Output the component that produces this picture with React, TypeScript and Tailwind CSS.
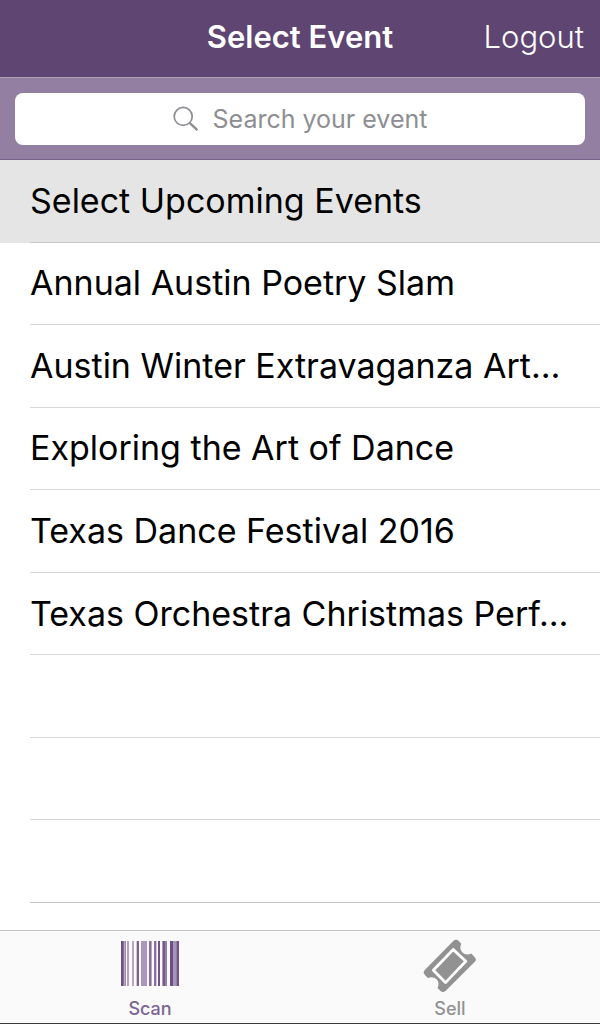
import { useState } from "react";

const events = [
  "Annual Austin Poetry Slam",
  "Austin Winter Extravaganza Art…",
  "Exploring the Art of Dance",
  "Texas Dance Festival 2016",
  "Texas Orchestra Christmas Perf…",
];

const emptyRows = [0, 1, 2];

// [x, width, color]
const bars: [number, number, string][] = [
  [0, 2, "#6c4f86"],
  [2, 1, "#8b72a0"],
  [3, 1, "#b3aab8"],
  [4, 1, "#a08cb2"],
  [6, 2, "#b3a0c2"],
  [11, 2, "#b7abc0"],
  [15, 1, "#cfc6d6"],
  [16, 2, "#7d648f"],
  [20, 6, "#ab97bd"],
  [28, 2, "#86709a"],
  [30, 1, "#b7a8c4"],
  [33, 2, "#8a70a1"],
  [35, 1, "#cfc6d6"],
  [37, 2, "#6f5389"],
  [41, 1, "#ab97bd"],
  [42, 2, "#745a8b"],
  [44, 2, "#957fa8"],
  [49, 3, "#6c4f86"],
  [52, 3, "#a893ba"],
  [55, 1, "#947da9"],
  [56, 2, "#6f5389"],
];

function BarcodeIcon() {
  return (
    <svg width="58" height="54" viewBox="0 0 58 54" aria-hidden="true">
      {bars.map(([x, width, color]) => (
        <rect key={x} x={x} y="2" width={width} height="45" fill={color} />
      ))}
    </svg>
  );
}

function TicketIcon() {
  return (
    <svg width="54" height="54" viewBox="0 0 54 54" aria-hidden="true">
      <path
        d="M30.5 1.8Q33 -.5 35.5 1.8L38.3 4.8Q36 10 39.2 13.2Q43 17 48.2 14.6L51.8 18.2Q54 20.5 51.8 22.8L22.5 52Q20 54.2 17.5 52L14.6 49Q17 43.5 13.6 40.2Q10 36.8 4.8 39L1.8 35.8Q-.5 33.5 1.8 31Z"
        fill="#929292"
      />
      <path
        d="M30.3 10.6L42.8 22.2L22.5 43.6L10.3 31.2Z"
        fill="none"
        stroke="#fff"
        strokeWidth="2.8"
        strokeLinejoin="round"
      />
    </svg>
  );
}

function SearchIcon() {
  return (
    <svg width="26" height="26" viewBox="0 0 26 26" fill="none" stroke="#8e8e93" aria-hidden="true">
      <circle cx="10.2" cy="10.4" r="9" strokeWidth="1.7" />
      <path d="M16.6 16.8L24.4 24.2" strokeWidth="2.4" />
    </svg>
  );
}

export default function App() {
  const [query, setQuery] = useState("");

  return (
    <div className="flex min-h-screen flex-col bg-white font-['Inter',sans-serif]">
      <header className="grid h-[78px] grid-cols-[1fr_auto_1fr] items-center border-b border-[#aaa2ae] bg-[#5f4571] px-4 pb-1 text-white">
        <h1 className="col-start-2 text-[31px] leading-10 font-semibold">Select Event</h1>
        <button type="button" className="justify-self-end text-[31px] leading-10 font-light">
          Logout
        </button>
      </header>

      <div className="border-b border-[#77608a] bg-[#927fa2] px-[15px] pt-[15px] pb-[14px]">
        <label className="flex h-[52px] items-center justify-center gap-3.5 rounded-lg bg-white">
          <SearchIcon />
          <input
            type="text"
            aria-label="Search your event"
            placeholder="Search your event"
            value={query}
            onChange={(e) => setQuery(e.target.value)}
            className="field-sizing-content text-[25px] leading-8 text-black outline-none placeholder:text-[#8e8e93]"
          />
        </label>
      </div>

      {/* all rows share the free height equally */}
      <main className="grid flex-1 auto-rows-fr pb-[27px]">
        <div className="flex bg-[#e5e5e5] pl-[30px]">
          <h2 className="flex flex-1 items-center border-b border-[#c8c8cc] text-[34px] leading-10 text-black">
            Select Upcoming Events
          </h2>
        </div>
        <ul className="contents">
          {events.map((name) => (
            <li key={name} className="ml-[30px] flex min-w-0 border-b border-[#d8d8da]">
              <button type="button" className="flex-1 truncate pr-4 text-left text-[34px] leading-10 text-black">
                {name}
              </button>
            </li>
          ))}
          {emptyRows.map((row) => (
            <li key={row} aria-hidden="true" className="ml-[30px] border-b border-[#d8d8da] last:border-[#c4c4c6]" />
          ))}
        </ul>
      </main>

      <nav className="grid h-[94px] grid-cols-2 border-t border-b border-t-[#c4c4c4] border-b-[#3a3a3a] bg-[#fafafa]">
        <button type="button" className="flex flex-col items-center pt-2 text-[#7d6595]">
          <BarcodeIcon />
          <span className="mt-1 text-[18px] leading-6 font-medium">Scan</span>
        </button>
        <button type="button" className="flex flex-col items-center pt-2 text-[#929292]">
          <TicketIcon />
          <span className="mt-1 text-[18px] leading-6 font-medium">Sell</span>
        </button>
      </nav>
    </div>
  );
}
